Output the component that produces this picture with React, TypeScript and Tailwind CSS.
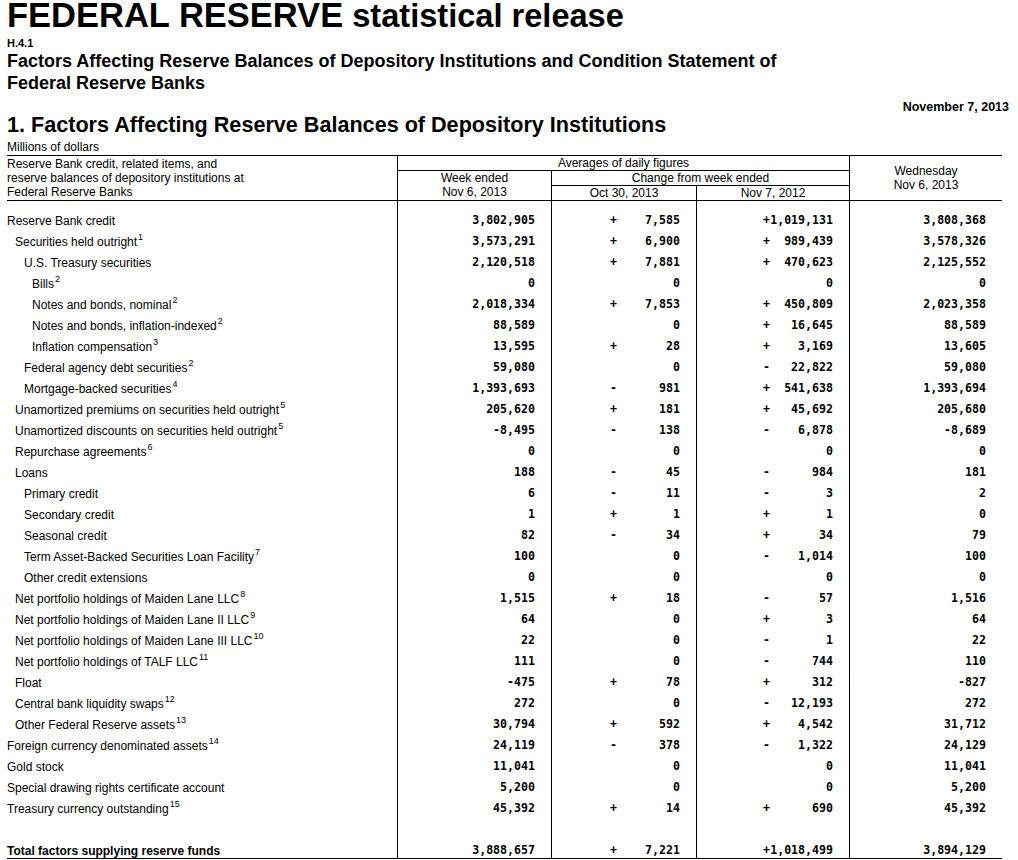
import React from "react";

type Row = {
  level: number;
  label: string;
  sup?: string;
  week: string;
  oct: [string, string];
  nov: [string, string];
  wed: string;
  bold?: boolean;
  blank?: boolean;
};

const rows: Row[] = [
  { level: 0, label: "Reserve Bank credit", week: "3,802,905", oct: ["+", "7,585"], nov: ["+", "1,019,131"], wed: "3,808,368" },
  { level: 1, label: "Securities held outright", sup: "1", week: "3,573,291", oct: ["+", "6,900"], nov: ["+", "989,439"], wed: "3,578,326" },
  { level: 2, label: "U.S. Treasury securities", week: "2,120,518", oct: ["+", "7,881"], nov: ["+", "470,623"], wed: "2,125,552" },
  { level: 3, label: "Bills", sup: "2", week: "0", oct: ["", "0"], nov: ["", "0"], wed: "0" },
  { level: 3, label: "Notes and bonds, nominal", sup: "2", week: "2,018,334", oct: ["+", "7,853"], nov: ["+", "450,809"], wed: "2,023,358" },
  { level: 3, label: "Notes and bonds, inflation-indexed", sup: "2", week: "88,589", oct: ["", "0"], nov: ["+", "16,645"], wed: "88,589" },
  { level: 3, label: "Inflation compensation", sup: "3", week: "13,595", oct: ["+", "28"], nov: ["+", "3,169"], wed: "13,605" },
  { level: 2, label: "Federal agency debt securities", sup: "2", week: "59,080", oct: ["", "0"], nov: ["-", "22,822"], wed: "59,080" },
  { level: 2, label: "Mortgage-backed securities", sup: "4", week: "1,393,693", oct: ["-", "981"], nov: ["+", "541,638"], wed: "1,393,694" },
  { level: 1, label: "Unamortized premiums on securities held outright", sup: "5", week: "205,620", oct: ["+", "181"], nov: ["+", "45,692"], wed: "205,680" },
  { level: 1, label: "Unamortized discounts on securities held outright", sup: "5", week: "-8,495", oct: ["-", "138"], nov: ["-", "6,878"], wed: "-8,689" },
  { level: 1, label: "Repurchase agreements", sup: "6", week: "0", oct: ["", "0"], nov: ["", "0"], wed: "0" },
  { level: 1, label: "Loans", week: "188", oct: ["-", "45"], nov: ["-", "984"], wed: "181" },
  { level: 2, label: "Primary credit", week: "6", oct: ["-", "11"], nov: ["-", "3"], wed: "2" },
  { level: 2, label: "Secondary credit", week: "1", oct: ["+", "1"], nov: ["+", "1"], wed: "0" },
  { level: 2, label: "Seasonal credit", week: "82", oct: ["-", "34"], nov: ["+", "34"], wed: "79" },
  { level: 2, label: "Term Asset-Backed Securities Loan Facility", sup: "7", week: "100", oct: ["", "0"], nov: ["-", "1,014"], wed: "100" },
  { level: 2, label: "Other credit extensions", week: "0", oct: ["", "0"], nov: ["", "0"], wed: "0" },
  { level: 1, label: "Net portfolio holdings of Maiden Lane LLC", sup: "8", week: "1,515", oct: ["+", "18"], nov: ["-", "57"], wed: "1,516" },
  { level: 1, label: "Net portfolio holdings of Maiden Lane II LLC", sup: "9", week: "64", oct: ["", "0"], nov: ["+", "3"], wed: "64" },
  { level: 1, label: "Net portfolio holdings of Maiden Lane III LLC", sup: "10", week: "22", oct: ["", "0"], nov: ["-", "1"], wed: "22" },
  { level: 1, label: "Net portfolio holdings of TALF LLC", sup: "11", week: "111", oct: ["", "0"], nov: ["-", "744"], wed: "110" },
  { level: 1, label: "Float", week: "-475", oct: ["+", "78"], nov: ["+", "312"], wed: "-827" },
  { level: 1, label: "Central bank liquidity swaps", sup: "12", week: "272", oct: ["", "0"], nov: ["-", "12,193"], wed: "272" },
  { level: 1, label: "Other Federal Reserve assets", sup: "13", week: "30,794", oct: ["+", "592"], nov: ["+", "4,542"], wed: "31,712" },
  { level: 0, label: "Foreign currency denominated assets", sup: "14", week: "24,119", oct: ["-", "378"], nov: ["-", "1,322"], wed: "24,129" },
  { level: 0, label: "Gold stock", week: "11,041", oct: ["", "0"], nov: ["", "0"], wed: "11,041" },
  { level: 0, label: "Special drawing rights certificate account", week: "5,200", oct: ["", "0"], nov: ["", "0"], wed: "5,200" },
  { level: 0, label: "Treasury currency outstanding", sup: "15", week: "45,392", oct: ["+", "14"], nov: ["+", "690"], wed: "45,392" },
  { level: 0, label: "", week: "", oct: ["", ""], nov: ["", ""], wed: "", blank: true },
  { level: 0, label: "Total factors supplying reserve funds", week: "3,888,657", oct: ["+", "7,221"], nov: ["+", "1,018,499"], wed: "3,894,129", bold: true },
];

const indent = ["pl-0", "pl-[8px]", "pl-[17px]", "pl-[25px]"];
const mono = "font-['DejaVu_Sans_Mono',monospace] text-[11.6px] font-bold";

// the last (total) row sits closer to the bottom rule
function rowHeight(r: Row) {
  return r.bold ? "h-[18px] pt-[3px]" : "h-[21px]";
}

function Change({ v }: { v: [string, string] }) {
  return (
    <span className={`flex ${mono}`}>
      <span className="w-[7px] text-center">{v[0]}</span>
      <span className="w-[63px] text-right">{v[1]}</span>
    </span>
  );
}

export default function App() {
  return (
    <div className="min-h-screen bg-white pl-[7px] pr-[9px] text-black font-['Liberation_Sans',Arial,sans-serif]">
      <h1 className="h-[30px] whitespace-nowrap font-bold leading-[30px]">
        <span className="text-[34.5px]">FEDERAL RESERVE</span>
        <span className="text-[32.6px]"> statistical release</span>
      </h1>
      <div className="mt-[6px] text-[11px] font-bold leading-[14px]">H.4.1</div>
      <h2 className="text-[18px] font-bold leading-[22px]">
        Factors Affecting Reserve Balances of Depository Institutions and Condition Statement of
        <br />
        Federal Reserve Banks
      </h2>
      <div className="mt-[6px] text-right text-[12.5px] font-bold leading-[14px]">November 7, 2013</div>
      <h3 className="whitespace-nowrap text-[21.6px] font-bold leading-[22px]">
        1. Factors Affecting Reserve Balances of Depository Institutions
      </h3>
      <div className="mt-[4px] text-[12px] leading-[15px]">Millions of dollars</div>

      <div className="w-[995px] text-[12px]">
        {/* header */}
        <div className="grid grid-cols-[390px_154px_145px_153px_153px] grid-rows-[15px_15px_14px] border-y border-black leading-[14px]">
          <div className="col-start-1 row-start-1 row-span-3 pt-[1px]">
            Reserve Bank credit, related items, and
            <br />
            reserve balances of depository institutions at
            <br />
            Federal Reserve Banks
          </div>
          <div className="col-start-2 col-span-3 row-start-1 border-l border-b border-black text-center">
            Averages of daily figures
          </div>
          <div className="col-start-2 row-start-2 row-span-2 border-l border-black text-center">
            Week ended
            <br />
            Nov 6, 2013
          </div>
          <div className="col-start-3 col-span-2 row-start-2 border-l border-b border-black text-center">
            Change from week ended
          </div>
          <div className="col-start-3 row-start-3 border-l border-black text-center">Oct 30, 2013</div>
          <div className="col-start-4 row-start-3 border-l border-black text-center">Nov 7, 2012</div>
          <div className="col-start-5 row-start-1 row-span-3 flex flex-col justify-center border-l border-black text-center">
            <span>Wednesday</span>
            <span>Nov 6, 2013</span>
          </div>
        </div>

        {/* body */}
        <div className="grid grid-cols-[390px_154px_145px_153px_153px] border-b border-black">
          <div className="pt-[9px]">
            {rows.map((r, i) => (
              <div
                key={i}
                className={`flex items-center whitespace-nowrap ${rowHeight(r)} ${indent[r.level]} ${r.bold ? "font-bold" : ""}`}
              >
                {r.label}
                {r.sup && <sup className="ml-[1px] text-[9px]">{r.sup}</sup>}
              </div>
            ))}
          </div>
          <div className="border-l border-black pt-[9px]">
            {rows.map((r, i) => (
              <div key={i} className={`flex items-center justify-end pr-4 ${rowHeight(r)} ${mono}`}>
                {r.week}
              </div>
            ))}
          </div>
          <div className="border-l border-black pt-[9px]">
            {rows.map((r, i) => (
              <div key={i} className={`flex items-center justify-end pr-4 ${rowHeight(r)}`}>
                {!r.blank && <Change v={r.oct} />}
              </div>
            ))}
          </div>
          <div className="border-l border-black pt-[9px]">
            {rows.map((r, i) => (
              <div key={i} className={`flex items-center justify-end pr-4 ${rowHeight(r)}`}>
                {!r.blank && <Change v={r.nov} />}
              </div>
            ))}
          </div>
          <div className="border-l border-black pt-[9px]">
            {rows.map((r, i) => (
              <div key={i} className={`flex items-center justify-end pr-4 ${rowHeight(r)} ${mono}`}>
                {r.wed}
              </div>
            ))}
          </div>
        </div>
      </div>
    </div>
  );
}
